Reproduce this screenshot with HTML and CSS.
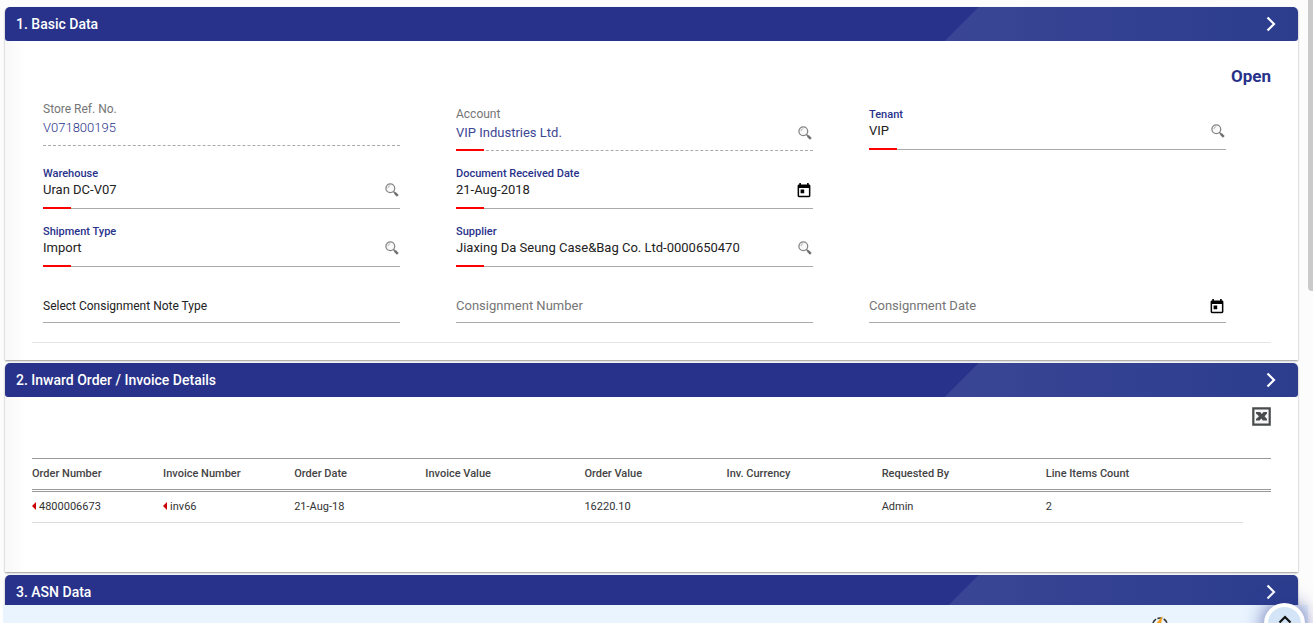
FILE: index.html
```html
<!DOCTYPE html>
<html lang="en">
<head>
<meta charset="utf-8">
<title>Inward</title>
<link rel="stylesheet" href="styles.css">
</head>
<body>
<svg class="sprite" aria-hidden="true">
  <symbol id="search" viewBox="0 0 14 14">
    <circle cx="5.3" cy="5.2" r="4.4" fill="#fafafa" stroke="#858585" stroke-width="1.3"/>
    <path d="M3 5.2a2.4 2.4 0 0 1 2.3-2.5" fill="none" stroke="#b5b5b5"/>
    <path d="M8.4 8.4l1.8 1.8" stroke="#777" stroke-width="1.4"/>
    <path d="M9.8 9.8l3 3" stroke="#707070" stroke-width="2.5"/>
  </symbol>
  <symbol id="calendar" viewBox="0 0 14 15">
    <path fill-rule="evenodd" d="M2.3 0h1.600v1.400h6.200V0h1.600v1.400H12a1.400 1.400 0 0 1 1.400 1.400v10A1.400 1.400 0 0 1 12 14.200H2A1.400 1.400 0 0 1 .6 12.800v-10A1.400 1.400 0 0 1 2 1.400h.3zM2.100 5v7.700h9.800V5zM3.600 6.600h3.600v3.600H3.600z"/>
  </symbol>
  <symbol id="chevron" viewBox="0 0 10 16">
    <path d="M1.500 1.500L8 8l-6.500 6.500" fill="none" stroke="currentColor" stroke-width="2.2"/>
  </symbol>
</svg>
<main class="page">
  <section class="card">
    <h2 class="bar">1. Basic Data <button class="toggle" aria-label="Toggle Basic Data"><svg><use href="#chevron"/></svg></button></h2>
    <div class="body">
      <p class="status">Open</p>
      <form class="fields">
        <div class="field readonly">
          <label for="ref">Store Ref. No.</label>
          <div class="control"><input class="light" id="ref" value="V071800195" readonly></div>
        </div>
        <div class="field readonly required lower">
          <label for="account">Account</label>
          <div class="control"><input id="account" value="VIP Industries Ltd." readonly><button type="button" class="icon" aria-label="Find account"><svg class="search"><use href="#search"/></svg></button></div>
        </div>
        <div class="field required lowest">
          <label for="tenant">Tenant</label>
          <div class="control"><input id="tenant" value="VIP"><button type="button" class="icon" aria-label="Find tenant"><svg class="search"><use href="#search"/></svg></button></div>
        </div>
        <div class="field required first">
          <label for="warehouse">Warehouse</label>
          <div class="control"><input id="warehouse" value="Uran DC-V07"><button type="button" class="icon" aria-label="Find warehouse"><svg class="search"><use href="#search"/></svg></button></div>
        </div>
        <div class="field required">
          <label for="received">Document Received Date</label>
          <div class="control"><input id="received" value="21-Aug-2018"><button type="button" class="icon date" aria-label="Pick date"><svg class="calendar"><use href="#calendar"/></svg></button></div>
        </div>
        <div class="field required first">
          <label for="shipment">Shipment Type</label>
          <div class="control"><input id="shipment" value="Import"><button type="button" class="icon" aria-label="Find shipment type"><svg class="search"><use href="#search"/></svg></button></div>
        </div>
        <div class="field required">
          <label for="supplier">Supplier</label>
          <div class="control"><input id="supplier" value="Jiaxing Da Seung Case&amp;Bag Co. Ltd-0000650470"><button type="button" class="icon" aria-label="Find supplier"><svg class="search"><use href="#search"/></svg></button></div>
        </div>
        <div class="field plain first">
          <div class="control"><select aria-label="Consignment note type"><option>Select Consignment Note Type</option></select></div>
        </div>
        <div class="field plain">
          <div class="control"><input placeholder="Consignment Number" aria-label="Consignment Number"></div>
        </div>
        <div class="field plain">
          <div class="control"><input placeholder="Consignment Date" aria-label="Consignment Date"><button type="button" class="icon date" aria-label="Pick consignment date"><svg class="calendar"><use href="#calendar"/></svg></button></div>
        </div>
      </form>
      <hr>
    </div>
  </section>

  <section class="card">
    <h2 class="bar">2. Inward Order / Invoice Details <button class="toggle" aria-label="Toggle Inward Order"><svg><use href="#chevron"/></svg></button></h2>
    <div class="body orders">
      <div class="tools">
        <button class="excel" aria-label="Export to Excel">
          <svg viewBox="0 0 19 19"><path d="M1.300 1.300h16.400v16.400H1.300z" fill="#f7f7f7" stroke="#484c4c" stroke-width="2.200"/><path d="M4 5h4.200l1.600 2L11.500 5H15v1.500L12.600 9.300 15 12v1.500h-4.200l-1.500-2-1.600 2H4V12l3-2.800-3-2.700z" fill="#484c4c"/></svg>
        </button>
      </div>
      <table>
        <thead>
          <tr><th class="w-s">Order Number</th><th class="w-s">Invoice Number</th><th class="w-s">Order Date</th><th class="w-l">Invoice Value</th><th class="w-m">Order Value</th><th class="w-ml">Inv. Currency</th><th class="w-lx">Requested By</th><th class="w-xl">Line Items Count</th><th class="w-end"></th></tr>
        </thead>
        <tbody>
          <tr><td class="flag">4800006673</td><td class="flag">inv66</td><td>21-Aug-18</td><td></td><td>16220.10</td><td></td><td>Admin</td><td>2</td><td class="end"></td></tr>
        </tbody>
      </table>
    </div>
  </section>

  <section class="card">
    <h2 class="bar">3. ASN Data <button class="toggle" aria-label="Toggle ASN Data"><svg><use href="#chevron"/></svg></button></h2>
  </section>
</main>
<footer class="dock">
  <svg class="spark" viewBox="0 0 18 18"><circle cx="9" cy="9.500" r="7.500" fill="none" stroke="#333" stroke-width="1.500" stroke-dasharray="5 1.500"/><path d="M11.500 0L3.500 9.500h4.300L6 18 14.500 7h-4.300z" fill="#f9a01b"/></svg>
</footer>
<button class="to-top" aria-label="Back to top"><svg viewBox="0 0 14 9"><path d="M1.500 7.500L7 2l5.500 5.500" fill="none" stroke="#111" stroke-width="2.200"/></svg></button>
<div class="thumb"></div>
</body>
</html>
```
FILE: styles.css
```css
* { box-sizing: border-box; }
body {
  margin: 0;
  height: 100vh;
  overflow: hidden;
  background: #fff;
  color: #222;
  font: 13px/16px Roboto, sans-serif;
}
.sprite { position: absolute; width: 0; height: 0; }
button { padding: 0; border: 0; background: none; color: inherit; display: flex; cursor: pointer; }
.page { padding: 7px 15px 0 5px; background: #fcfcfc; }
.card {
  margin-bottom: 3px;
  border-radius: 5px 5px 0 0;
  background: linear-gradient(90deg, #f8f8f8, #fff 20px);
  box-shadow: 0 1px 2px rgba(0, 0, 0, .4);
}
.bar {
  display: flex;
  align-items: center;
  justify-content: space-between;
  height: 34px;
  margin: 0;
  padding: 0 22px 0 11px;
  border-radius: 5px 5px 3px 3px;
  background:
    linear-gradient(135deg, #28328a 24px, transparent 25px) right / 354px 100% no-repeat,
    linear-gradient(90deg, #3a4595, #2c3d8e) right / 354px 100% no-repeat,
    #28328a;
  color: #fff;
  font-size: 14px;
  font-weight: 500;
}
.toggle svg { width: 10px; height: 16px; }
.body { padding: 0 27px; }
.status {
  margin: 0;
  padding: 25px 0 15px;
  color: #28328a;
  font-size: 17px;
  font-weight: 700;
  line-height: 20px;
  text-align: right;
}
.fields {
  display: grid;
  grid-template-columns: repeat(3, 1fr);
  gap: 15px 56px;
  padding: 0 45px 19px 11px;
}
.first { grid-column: 1; }
.field label { display: block; color: #28328a; font-size: 11px; font-weight: 500; }
.control {
  position: relative;
  display: flex;
  padding-bottom: 10px;
  border-bottom: 1px solid #aaa;
}
.required .control::after {
  content: "";
  position: absolute;
  left: 0;
  bottom: -1px;
  width: 28px;
  height: 2px;
  background: #f00;
}
.control input, .control select {
  flex: 1;
  min-width: 0;
  height: 16px;
  padding: 0;
  border: 0;
  outline: 0;
  background: none;
  color: #222;
  font: inherit;
}
.control select { appearance: none; font-size: 12px; }
.control input::placeholder { color: #757575; opacity: 1; }
.readonly label { color: #757575; font-size: 12px; font-weight: 400; }
.readonly .control { padding: 3px 0 9px; border-bottom-style: dashed; }
.readonly .control input { color: #3c4694; }
.readonly .control .light { font-weight: 300; color: #28328a; }
.lower { padding-top: 5px; }
.lowest { padding-top: 6px; }
.plain { padding-top: 16px; }
.plain .control { padding-bottom: 8px; }
.icon { width: 16px; height: 16px; justify-content: center; align-items: center; }
.icon.date { width: 18px; }
.search { width: 14px; height: 14px; }
.calendar { width: 14px; height: 15px; }
hr { margin: 0; padding-bottom: 17px; border: 0; border-top: 1px solid #e5e5e5; }

.orders { padding-bottom: 49px; }
.tools { display: flex; justify-content: flex-end; padding: 10px 0 32px; }
.excel svg { width: 19px; height: 19px; }
table {
  width: 100%;
  border-collapse: separate;
  border-spacing: 0;
  table-layout: fixed;
  font-size: 11px;
  text-align: left;
}
.w-s { width: 131px; }
.w-m { width: 142px; }
.w-ml { width: 155px; }
.w-l { width: 159px; }
.w-lx { width: 164px; }
.w-xl { width: 197px; }
.w-end { width: 28px; }
th {
  height: 34px;
  padding: 0;
  border-top: 1px solid #999;
  border-bottom: 3px double #999;
  color: #444;
  font-weight: 500;
}
td { height: 31px; padding: 0; border-bottom: 1px solid #ddd; color: #333; }
.end { border: 0; }
.flag::before {
  content: "";
  display: inline-block;
  margin-right: 3px;
  border: 4px solid transparent;
  border-right-color: #c00;
  border-left: 0;
}
.dock {
  position: fixed;
  inset: auto 5px 0 3px;
  height: 18px;
  padding: 11px 139px 0 0;
  overflow: hidden;
  background: #e9f4ff;
  display: flex;
  justify-content: flex-end;
}
.spark { flex: none; width: 18px; height: 18px; }
.to-top {
  position: fixed;
  right: 8px;
  bottom: -21px;
  width: 41px;
  height: 41px;
  padding-top: 8px;
  justify-content: center;
  border: 4px solid #fff;
  border-radius: 50%;
  background: #d3e5f6;
  box-shadow: 0 0 18px 2px rgba(40, 50, 138, .6);
}
.to-top svg { width: 14px; height: 9px; }
.thumb {
  position: fixed;
  top: 0;
  right: 0;
  width: 5px;
  height: 291px;
  border-radius: 0 0 0 4px;
  background: #cacaca;
}
```
